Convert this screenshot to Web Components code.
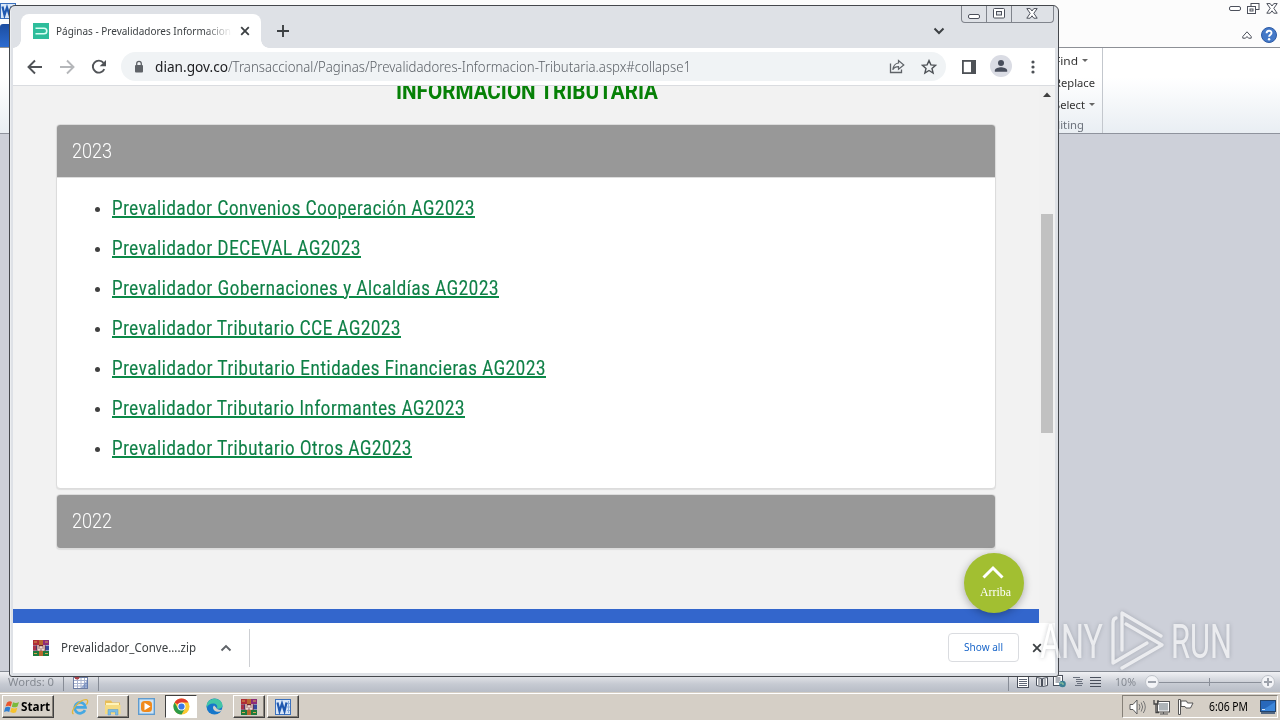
<!DOCTYPE html>
<html lang="es">
<head>
<meta charset="utf-8">
<title>Prevalidadores</title>
<style>
    html, body { margin: 0; width: 1280px; height: 720px; overflow: hidden; }
    body { font-family: "Noto Sans", "Open Sans", sans-serif; background: #cdd0d9; }
</style>
</head>
<body>
<desk-top>
    <word-window></word-window>
    <chrome-window slot="window">
        <accordion-panel year="2023">
            <doc-link w="363">Prevalidador Convenios Cooperación AG2023</doc-link>
            <doc-link w="249">Prevalidador DECEVAL AG2023</doc-link>
            <doc-link w="387">Prevalidador Gobernaciones y Alcaldías AG2023</doc-link>
            <doc-link w="289">Prevalidador Tributario CCE AG2023</doc-link>
            <doc-link w="434">Prevalidador Tributario Entidades Financieras AG2023</doc-link>
            <doc-link w="353">Prevalidador Tributario Informantes AG2023</doc-link>
            <doc-link w="300">Prevalidador Tributario Otros AG2023</doc-link>
        </accordion-panel>
        <accordion-panel year="2022" closed></accordion-panel>
    </chrome-window>
    <task-bar slot="bar"></task-bar>
    <water-mark slot="mark"></water-mark>
</desk-top>

<script>
// [width, height, markup]
const ICONS = {
    dian: [16, 16, '<rect width="16" height="16" fill="#2dbd9b"/><path d="M2.5 5.2H11a2.6 2.6 0 0 1 0 5.6H2.5" fill="none" stroke="#d9fff3" stroke-width="1.6"/>'],
    close: [10, 10, '<path d="M1.2 1.2l7.6 7.6M8.8 1.2L1.2 8.8" stroke="#3c4043" stroke-width="1.8"/>'],
    plus: [12, 12, '<path d="M6 0v12M0 6h12" stroke="#3c4043" stroke-width="1.9"/>'],
    chevron: [12, 8, '<path d="M1.5 1.5L6 6l4.500-4.500" fill="none" stroke="#3c4043" stroke-width="2"/>'],
    back: [16, 16, '<path d="M15 8H2M8 1.500L1.500 8 8 14.500" fill="none" stroke="#505357" stroke-width="1.9"/>'],
    forward: [16, 16, '<path d="M1 8h13M8 1.500L14.500 8 8 14.500" fill="none" stroke="#b5b7ba" stroke-width="1.9"/>'],
    reload: [16, 16, '<path d="M13.300 10.200A6 6 0 1 1 12.500 3.800" fill="none" stroke="#505357" stroke-width="1.9"/><path d="M15 1v6.300H8.700z" fill="#505357"/>'],
    lock: [10, 14, '<rect x="1" y="5" width="8" height="7.500" rx="1" fill="#5f6368"/><path d="M2.700 6V3.600a2.300 2.300 0 0 1 4.600 0V6" fill="none" stroke="#5f6368" stroke-width="1.300"/>'],
    share: [16, 15, '<path d="M1.500 4.500v9h11v-3" fill="none" stroke="#5f6368" stroke-width="1.300"/><path d="M9.500 4V1.500L14.800 6 9.500 10.300V7.700C7 7.700 5 8.500 3.800 10.800 4.300 7 6.200 4.400 9.500 4z" fill="none" stroke="#5f6368" stroke-width="1.200"/>'],
    star: [16, 16, '<path d="M8 1.600l1.900 4.300 4.700.4-3.600 3.100 1.100 4.600L8 11.500 3.900 14l1.100-4.600L1.400 6.300l4.700-.4z" fill="none" stroke="#4d5156" stroke-width="1.400"/>'],
    side: [14, 14, '<rect x=".9" y=".9" width="12.200" height="12.200" fill="#fff" stroke="#4d5156" stroke-width="1.800"/><path d="M9 1h4v12H9z" fill="#4d5156"/>'],
    user: [22, 22, '<circle cx="11" cy="11" r="11" fill="#dadce4"/><circle cx="11" cy="8" r="3" fill="#484e5c"/><path d="M4.800 16.700v-1.200c0-2 4-3.200 6.200-3.200s6.200 1.200 6.200 3.200v1.200z" fill="#484e5c"/>'],
    dots: [4, 14, '<g fill="#4d5156"><circle cx="2" cy="2" r="1.600"/><circle cx="2" cy="7" r="1.600"/><circle cx="2" cy="12" r="1.600"/></g>'],
    arrowUp: [8, 5, '<path d="M0 5L4 .5 8 5z" fill="#404040"/>'],
    dlUp: [12, 8, '<path d="M1.500 6.500L6 2l4.500 4.500" fill="none" stroke="#5f6368" stroke-width="1.900"/>'],
    topUp: [22, 14, '<path d="M1.500 12.500L11 3l9.500 9.500" fill="none" stroke="#fff" stroke-width="3"/>'],
    winrar: [16, 16, '<path d="M0 0h6v5H0z" fill="#b02d35"/><path d="M10 0h6v5h-6z" fill="#8d2a78"/><path d="M0 5.500h16v5H0z" fill="#34489e"/><path d="M0 5.500h3v5H0z" fill="#a8324a"/><path d="M0 11h16v5H0z" fill="#1d7a3a"/><path d="M6 0h4v16H6z" fill="#b8662f"/><path d="M3.500 5h9v6h-9z" fill="#6d2130"/><path d="M5 5v5h2V7h2v3h2V5" fill="none" stroke="#f7ecdf" stroke-width="1.300"/><path d="M1 2h3M12 2h3M1 13.500h3M12 13.500h3" stroke="#d7a04d"/>'],
    winMin: [12, 5, '<rect x=".5" y=".5" width="11" height="4" rx="1.500" fill="#fff" stroke="#4c505b"/>'],
    winMax: [12, 11, '<rect x=".5" y=".5" width="11" height="9.500" rx="1" fill="#fff" stroke="#4c505b"/><rect x="3.500" y="3.500" width="5" height="3.500" fill="#dee1e6" stroke="#4c505b"/>'],
    winClose: [12, 11, '<path d="M.8.600h3.400L6 3 7.800.600h3.400L7.800 5.300l3.400 4.900H7.800L6 7.800l-1.800 2.400H.8l3.400-4.900z" fill="#fff" stroke="#4c505b"/>'],
    restore: [13, 11, '<rect x="4" y=".5" width="8" height="6" fill="#fff" stroke="#4c505b"/><rect x=".5" y="3.500" width="8" height="7" fill="#fff" stroke="#4c505b"/><rect x="3" y="6" width="3" height="2" fill="none" stroke="#4c505b"/>'],
    collapse: [10, 9, '<path d="M.8 7.200V5.500L5 .800l4.200 4.700v1.700H6.500L5 5.500 3.500 7.200z" fill="#fff" stroke="#4c505b"/>'],
    help: [16, 16, '<circle cx="8" cy="8" r="7.500" fill="#4479c8" stroke="#2d5ba5"/><path d="M5.600 6.200C5.600 3 10.600 3 10.500 6c0 1.600-2.400 1.800-2.400 3.700" fill="none" stroke="#fff" stroke-width="1.900"/><circle cx="8.100" cy="12.200" r="1.200" fill="#fff"/>'],
    word: [16, 16, '<rect x=".5" y=".5" width="15" height="15" fill="#d9e7f8" stroke="#3a70bd"/><path d="M13.500 2v12M12 4.500h3M12 8h3M12 11.500h3" stroke="#8aaede"/><path d="M2.500 3.500l2 8.700L7 4.500l2.500 7.700 2-8.700" fill="none" stroke="#1f58b0" stroke-width="2.200"/>'],
    calendar: [16, 14, '<rect x=".5" y="2.500" width="14" height="11" fill="#fff" stroke="#6d7da3"/><path d="M1 5.500h13M1 8.500h13M1 11h13M4.500 3v10M8 3v10M11.500 3v10" stroke="#a9b4d0"/><path d="M8 13h7V4z" fill="#5f7bb5" opacity=".6"/><circle cx="4" cy="2" r="2.500" fill="#a9434a"/>'],
    start: [16, 16, '<path d="M3 3.500Q6 1.500 8 3L6.800 7.500Q4.500 6 1.500 7.500z" fill="#e9562d"/><path d="M9 3.200q3 1.500 6-.2L13.500 7.500q-3 1.600-5.700.2z" fill="#7bba3c"/><path d="M1.200 8.500q3-1.500 5.200 0L5.200 13Q3 11.500 0 13z" fill="#2f7fd1"/><path d="M7.500 8.800q3 1.400 5.800-.1L12 13.200q-3 1.400-5.800-.1z" fill="#f6c22d"/>'],
    ie: [18, 18, '<path d="M14 12.200A5.400 5.400 0 1 1 14.500 9.300H5" fill="none" stroke="#45a8e2" stroke-width="2.700"/><path d="M2.500 16C-2 13.500 9 1 15.500 1.700c2.200.5 1 3.500-.1 5" fill="none" stroke="#e2b63a" stroke-width="1.300"/>'],
    folder: [18, 18, '<path d="M1 2.500h6l1.500 2H16V16H1z" fill="#e8bd56"/><path d="M2 5h13v9H2z" fill="#fff3b8"/><path d="M1 7h15.500v9H1z" fill="#f5db82"/><path d="M4 17v-5.500h10V17h-2.500v-3h-5v3z" fill="#79bde8" stroke="#5a99c4" stroke-width=".5"/>'],
    media: [17, 17, '<rect x=".7" y=".7" width="15.600" height="15.600" fill="#cfe5f6" stroke="#5e9bcf" stroke-width="1.400"/><rect x="3" y="3" width="11" height="11" rx="3.500" fill="#f08a1c"/><path d="M6.500 4.800v7.400l6-3.700z" fill="#fff"/>'],
    chrome: [17, 17, '<circle cx="8.500" cy="8.500" r="8" fill="#fcc934"/><path d="M8.500 8.500L1.570 4.500A8 8 0 0 1 15.430 4.500H8.500z" fill="#e33b2e"/><path d="M1.570 4.500A8 8 0 0 0 8.500 16.500L12 10.500 8.500 8.500 5 10.500z" fill="#2c9b49"/><circle cx="8.500" cy="8.500" r="4" fill="#fff"/><circle cx="8.500" cy="8.500" r="3.100" fill="#3b78e7"/>'],
    edge: [17, 17, '<circle cx="8.500" cy="8.500" r="8" fill="#1677ca"/><path d="M.7 7C2-1.500 15.500-1.500 16.500 7c.2 3-3 4.700-6 3.400 2-2-.2-5-3.200-4.800C4 5.700 1.500 7.200.7 10z" fill="#42c5a6"/><path d="M8 7.500c-2.500 2.500 0 6.500 5 6.300 1.500-.2 2.800-1 3.500-2.300-2 .9-6 .3-6.400-2z" fill="#d4d0c8"/>'],
    speaker: [17, 16, '<path d="M1 5.500h3l4-4.500v14l-4-4.500H1z" fill="#fff" stroke="#5b5b5b"/><path d="M10 5q2 3 0 6M12.200 3.500q3 4.500 0 9M14.300 2q4 6 0 12" fill="none" stroke="#777"/>'],
    network: [17, 16, '<rect x="5.500" y="3.500" width="10" height="8.500" fill="#aeb4b8" stroke="#fff"/><rect x="4.500" y="2.500" width="12" height="10.500" fill="none" stroke="#555"/><path d="M7 15h8M10.500 13v2" stroke="#555"/><path d="M1 1v4h4V1M3 5v8.500h3" fill="none" stroke="#444" stroke-width="1.300"/>'],
    flag: [17, 16, '<path d="M1.500.5h2V15.500h-2z" fill="#fff" stroke="#555"/><path d="M4 2h5.500l1 2H16l-2.500 5H9L8 7.500H4z" fill="#fff" stroke="#555"/>'],
    desktop: [16, 14, '<rect x=".5" y=".5" width="15" height="11" fill="#2868bb" stroke="#23436b"/><path d="M1 11L15 2v9z" fill="#3c86da"/><path d="M1 13h14" stroke="#23436b" stroke-width="1.500"/><path d="M2 9.500h3" stroke="#cfe2f6"/>'],
    viewPage: [12, 12, '<rect x=".5" y=".5" width="11" height="11" fill="#fff" stroke="#4a505c"/><path d="M2 3.500h8M2 5.500h8M2 7.500h8M2 9.500h8" stroke="#5f6675"/>'],
    viewRead: [12, 12, '<path d="M.5 1.500l5 1v8l-5-1zM11.500 1.500l-5 1v8l5-1z" fill="#fff" stroke="#4a505c"/><path d="M2 4h2.500M2 6h2.500M2 8h2.500M7.500 4H10M7.500 6H10M7.500 8H10" stroke="#5f6675"/>'],
    viewWeb: [13, 13, '<rect x=".5" y=".5" width="9" height="10" fill="#fff" stroke="#4a505c"/><path d="M2.500 3h5M2.500 5h5M2.500 7h4" stroke="#5f6675"/><circle cx="9.500" cy="9" r="3.300" fill="#3a7f93"/><path d="M7 8h3v2" stroke="#9fd0a0" fill="none"/>'],
    viewOutline: [11, 12, '<path d="M0 1.500h7M3 3.500h7M3 5.500h6M4 7.500h6M2 9.500h7" stroke="#69707d"/>'],
    viewDraft: [11, 12, '<path d="M0 1.500h11M0 4.500h11M0 7.500h11M0 10.500h11" stroke="#4a505c"/>']
};

class UiIcon extends HTMLElement {
    connectedCallback() {
        if (this.shadowRoot) return;
        const [w, h, body] = ICONS[this.getAttribute('name')];
        this.attachShadow({ mode: 'open' }).innerHTML = `
        <style>
            :host { display: block; flex: none; width: ${w}px; height: ${h}px; }
            svg { display: block; }
        </style>
        <svg width="${w}" height="${h}" viewBox="0 0 ${w} ${h}">${body}</svg>`;
    }
}

// One line of text squeezed or stretched to the width in "w"
class FitText extends HTMLElement {
    connectedCallback() {
        if (this.shadowRoot) return;
        const w = Number(this.getAttribute('w'));
        this.attachShadow({ mode: 'open' }).innerHTML = `
        <style>
            :host { display: block; flex: none; width: ${w}px; white-space: nowrap; }
            span { display: inline-block; transform-origin: 0 50%; }
        </style>
        <span><slot></slot></span>`;
        const span = this.shadowRoot.querySelector('span');
        span.style.transform = `scaleX(${w / span.getBoundingClientRect().width})`;
    }
}

class DeskTop extends HTMLElement {
    constructor() {
        super();
        this.attachShadow({ mode: 'open' }).innerHTML = `
        <style>
            :host { display: block; position: relative; width: 1280px; height: 720px; overflow: hidden; }
            ::slotted([slot="window"]) { position: absolute; left: 9px; top: 5px; }
            ::slotted([slot="bar"]) { position: absolute; left: 0; bottom: 0; }
            ::slotted([slot="mark"]) { position: absolute; left: 1040px; top: 609px; }
        </style>
        <slot></slot><slot name="window"></slot><slot name="bar"></slot><slot name="mark"></slot>`;
    }
}

class WordWindow extends HTMLElement {
    constructor() {
        super();
        this.attachShadow({ mode: 'open' }).innerHTML = `
        <style>
            :host { display: flex; flex-direction: column; height: 692px; font-size: 11px; color: #333; }
            .title { height: 47px; display: flex; justify-content: space-between; background: #fcfcfc; border-bottom: 1px solid #8d9096; }
            .file { display: flex; flex-direction: column; justify-content: space-between; padding-top: 3px; }
            .tab { width: 12px; height: 23px; background: linear-gradient(#1c4da0, #2c6bd0); border-radius: 3px 0 0 0; }
            .ctl { padding: 3px 3px 0 0; display: flex; flex-direction: column; align-items: flex-end; gap: 13px; }
            .row { display: flex; align-items: center; gap: 6px; margin-right: -1px; }
            .row.b { gap: 9px; margin-right: 0; }
            .ribbon { height: 85px; display: flex; border-bottom: 1px solid #8f939d; background: linear-gradient(#fff 35%, #e9eef3); }
            .group { width: 48px; padding: 1px 0 0 1054px; border-right: 1px solid #c3c7cd; }
            .cmd { height: 22px; display: flex; align-items: center; gap: 4px; }
            .cmd i { border: 3px solid transparent; border-top-color: #666; border-bottom: 0; }
            .name { line-height: 20px; color: #6b717b; }
            .paper { flex: 1; background: #cdd0d9; }
            .status { height: 21px; box-sizing: border-box; display: flex; align-items: center; border-top: 1px solid #868b94; background: linear-gradient(#f0f1f4, #c6cad2 60%, #b8bdc6); color: #858a92; }
            .status > fit-text { margin-top: -2px; }
            .status > .zoom { margin-top: -1px; }
            .status > ui-icon { margin-top: -1px; }
            .sep { width: 1px; height: 17px; background: #878c96; }
            .zoom { display: flex; align-items: center; }
            .knob { width: 12px; height: 12px; border: 1px solid #bfc3ca; border-radius: 50%; background: #f3f4f7; display: grid; place-items: center; }
            .knob svg { display: block; }
            .track { width: 102px; height: 8px; background: linear-gradient(90deg, transparent 50px, #8a8f99 50px 51px, transparent 51px), linear-gradient(transparent 4px, #8a8f99 4px 5px, transparent 5px); }
        </style>
        <div class="title">
            <div class="file"><ui-icon name="word"></ui-icon><div class="tab"></div></div>
            <div class="ctl">
                <div class="row"><ui-icon name="winMin"></ui-icon><ui-icon name="restore"></ui-icon><ui-icon name="winClose"></ui-icon></div>
                <div class="row b"><ui-icon name="collapse"></ui-icon><ui-icon name="help"></ui-icon></div>
            </div>
        </div>
        <div class="ribbon">
            <div class="group">
                <div class="cmd"><fit-text w="24">Find</fit-text><i></i></div>
                <div class="cmd"><fit-text w="41">Replace</fit-text></div>
                <div class="cmd"><fit-text w="31">Select</fit-text><i></i></div>
                <div class="name"><fit-text w="37" style="margin-left:-7px">Editing</fit-text></div>
            </div>
        </div>
        <div class="paper"></div>
        <div class="status">
            <fit-text w="46" style="margin-left:8px">Words: 0</fit-text>
            <div class="sep" style="margin-left:9px"></div>
            <ui-icon name="calendar" style="margin-left:9px"></ui-icon>
            <div class="sep" style="margin-left:9px"></div>
            <div class="sep" style="margin-left:909px"></div>
            <ui-icon name="viewPage" style="margin-left:8px"></ui-icon>
            <ui-icon name="viewRead" style="margin-left:7px"></ui-icon>
            <ui-icon name="viewWeb" style="margin-left:5px"></ui-icon>
            <ui-icon name="viewOutline" style="margin-left:7px"></ui-icon>
            <ui-icon name="viewDraft" style="margin-left:6px"></ui-icon>
            <fit-text w="21" style="margin-left:14px">10%</fit-text>
            <div class="zoom" style="margin-left:9px">
                <div class="knob"><svg width="8" height="8"><path d="M0 4h8" stroke="#9da2ab" stroke-width="2"/></svg></div>
                <div class="track"></div>
                <div class="knob"><svg width="8" height="8"><path d="M0 4h8M4 0v8" stroke="#9da2ab" stroke-width="2"/></svg></div>
            </div>
        </div>`;
    }
}

class ChromeWindow extends HTMLElement {
    constructor() {
        super();
        this.attachShadow({ mode: 'open' }).innerHTML = `
        <style>
            :host { display: flex; flex-direction: column; box-sizing: border-box; width: 1050px; height: 672px; padding: 0 3px 3px; border: 1px solid #44474c; border-radius: 6px 6px 3px 3px; background: #dee1e6; box-shadow: inset 1px 0 #eceef1; }
            .strip { height: 42px; display: flex; align-items: flex-end; }
            .tab { width: 240px; height: 34px; margin-left: 8px; box-sizing: border-box; padding: 0 11px 1px 12px; display: flex; align-items: center; background: #fff; border-radius: 8px 8px 0 0; font-size: 11.5px; color: #3c4043; }
            .foot { width: 8px; height: 8px; background: radial-gradient(circle at 100% 0, transparent 7.5px, #fff 8px); }
            .title { margin: -1px 0 0 7px; width: 176px; overflow: hidden; -webkit-mask-image: linear-gradient(90deg, #000 84%, transparent); }
            .new { margin: 0 0 11px 8px; }
            .more { margin: 0 0 13px auto; }
            .buttons { align-self: flex-start; height: 16px; display: flex; margin: 0 1px 0 16px; border: 1px solid #80848c; border-top: 0; border-radius: 0 0 4px 4px; }
            .buttons div { display: grid; place-items: center; width: 24px; border-right: 1px solid #80848c; }
            .buttons div:last-child { width: 41px; border: 0; }
            .bar { height: 37px; display: flex; align-items: center; background: #fff; border-bottom: 1px solid #dadce0; }
            .url { width: 825px; height: 29px; margin: 0 16px 0 14px; box-sizing: border-box; border-radius: 15px; padding: 0 9px 0 13px; display: flex; align-items: center; background: #f0f3f5; font-size: 14px; font-weight: 300; color: #5b6066; }
            .url b { font-weight: 400; color: #202124; }
            .view { height: 537px; display: flex; background: #f1f1f1; }
            .page { width: 1026px; height: 537px; position: relative; overflow: hidden; background: #f2f2f2; }
            h2 { margin: -9px 0 0 383px; height: 47px; font: 700 23.5px/28px Roboto, sans-serif; color: #068006; }
            .panels { display: flex; flex-direction: column; gap: 5px; width: 940px; margin-left: 43px; }
            .footer { height: 14px; background: #3366cc; margin-top: 60px; }
            .up { position: absolute; left: 951px; top: 467px; width: 60px; height: 60px; box-sizing: border-box; border-radius: 50%; background: #a2bf31; box-shadow: 0 2px 8px rgba(0,0,0,.3); display: flex; flex-direction: column; align-items: center; padding-top: 12px; color: #fff; font: 13px/16px "Liberation Serif", serif; }
            .up ui-icon { margin-left: -2px; }
            .up fit-text { margin: 5px 0 0 3px; }
            .scroll { flex: 1; display: flex; flex-direction: column; align-items: center; padding-top: 6px; }
            .thumb { width: 12px; height: 219px; margin-top: 117px; background: #c1c1c1; }
            .dl { height: 50px; display: flex; align-items: center; background: #fff; font-size: 12px; color: #3c4043; }
            .dl hr { width: 1px; height: 38px; border: 0; margin: 0 0 0 17px; background: #cdcfd3; }
            .all { width: 69px; height: 27px; display: grid; place-items: center; border: 1px solid #dadce0; border-radius: 4px; margin: -2px 13px 0 auto; color: #1a66c9; font-size: 11.5px; }
        </style>
        <div class="strip">
            <div class="foot" style="margin-right:-8px; background: radial-gradient(circle at 0 0, transparent 7.5px, #fff 8px)"></div>
            <div class="tab">
                <ui-icon name="dian"></ui-icon>
                <div class="title"><fit-text w="175">Páginas - Prevalidadores Informacion</fit-text></div>
                <ui-icon name="close" style="margin-left:8px"></ui-icon>
            </div>
            <div class="foot"></div>
            <ui-icon class="new" name="plus"></ui-icon>
            <ui-icon class="more" name="chevron"></ui-icon>
            <div class="buttons">
                <div><ui-icon name="winMin" style="margin-top:5px"></ui-icon></div>
                <div><ui-icon name="winMax" style="margin-top:-1px"></ui-icon></div>
                <div><ui-icon name="winClose" style="margin:-1px 2px 0 0"></ui-icon></div>
            </div>
        </div>
        <div class="bar">
            <ui-icon name="back" style="margin-left:14px"></ui-icon>
            <ui-icon name="forward" style="margin-left:16px"></ui-icon>
            <ui-icon name="reload" style="margin-left:16px"></ui-icon>
            <div class="url">
                <ui-icon name="lock"></ui-icon>
                <fit-text w="73" style="margin-left:11px"><b>dian.gov.co</b></fit-text>
                <fit-text w="463">/Transaccional/Paginas/Prevalidadores-Informacion-Tributaria.aspx#collapse1</fit-text>
                <ui-icon name="share" style="margin-left:auto"></ui-icon>
                <ui-icon name="star" style="margin-left:16px"></ui-icon>
            </div>
            <ui-icon name="side"></ui-icon>
            <ui-icon name="user" style="margin:-1px 0 0 14px"></ui-icon>
            <ui-icon name="dots" style="margin-left:19px"></ui-icon>
        </div>
        <div class="view">
            <div class="page">
                <h2><fit-text w="262">INFORMACIÓN TRIBUTARIA</fit-text></h2>
                <div class="panels"><slot></slot></div>
                <div class="footer"></div>
                <div class="up"><ui-icon name="topUp"></ui-icon><fit-text w="31">Arriba</fit-text></div>
            </div>
            <div class="scroll"><ui-icon name="arrowUp"></ui-icon><div class="thumb"></div></div>
        </div>
        <div class="dl">
            <ui-icon name="winrar" style="margin:-1px 0 0 20px"></ui-icon>
            <fit-text w="135" style="margin:-2px 0 0 12px">Prevalidador_Conve....zip</fit-text>
            <ui-icon name="dlUp" style="margin-left:24px"></ui-icon>
            <hr>
            <div class="all"><fit-text w="39" style="margin-top:-2px">Show all</fit-text></div>
            <ui-icon name="close" style="margin-right:13px"></ui-icon>
        </div>`;
    }
}

class AccordionPanel extends HTMLElement {
    connectedCallback() {
        if (this.shadowRoot) return;
        const closed = this.hasAttribute('closed');
        this.attachShadow({ mode: 'open' }).innerHTML = `
        <style>
            :host { display: block; box-sizing: border-box; border: 1px solid #dcdcdc; border-radius: 4px; background: #fff; box-shadow: 0 1px 1px rgba(0,0,0,.08); overflow: hidden; font-family: Roboto, sans-serif; }
            .head { height: 52px; padding-left: 15px; display: flex; align-items: center; background: #989898; color: #fff; font-size: 21px; font-weight: 300; }
            .head.closed { height: 53px; padding-bottom: 1px; box-sizing: border-box; }
            .body { padding: 10px 0 20px 36px; border-top: 1px solid #ddd; }
        </style>
        <div class="head ${closed ? 'closed' : ''}"><fit-text w="40">${this.getAttribute('year')}</fit-text></div>
        ${closed ? '' : '<div class="body"><slot></slot></div>'}`;
    }
}

class DocLink extends HTMLElement {
    connectedCallback() {
        if (this.shadowRoot) return;
        this.attachShadow({ mode: 'open' }).innerHTML = `
        <style>
            :host { display: flex; align-items: center; height: 40px; font-size: 20px; letter-spacing: .8px; }
            i { width: 5px; height: 5px; margin: 2px 12px 0 2px; border-radius: 50%; background: #404040; }
            a { color: #0d7f45; -webkit-text-stroke: .2px; text-decoration: underline #0b8a48; text-decoration-thickness: 2px; text-underline-offset: 1px; }
        </style>
        <i></i><fit-text w="${this.getAttribute('w')}"><a><slot></slot></a></fit-text>`;
    }
}

class TaskBar extends HTMLElement {
    constructor() {
        super();
        this.attachShadow({ mode: 'open' }).innerHTML = `
        <style>
            :host { display: flex; align-items: center; box-sizing: border-box; width: 1280px; height: 28px; padding: 1px 2px 0; background: #d5cfc6; box-shadow: inset 0 1px #d5cfc6, inset 0 2px #fff; font-size: 12px; color: #000; }
            .btn { box-sizing: border-box; height: 23px; width: 32px; display: flex; align-items: center; justify-content: center; border: 1px solid; border-color: #fff #404040 #404040 #fff; box-shadow: inset -1px -1px #858078; }
            .on { background: #fff; border-color: #404040 #fff #fff #404040; box-shadow: none; }
            .start { width: 52px; justify-content: flex-start; gap: 1px; padding-left: 1px; font-weight: 700; }
            .tray { box-sizing: border-box; height: 23px; width: 156px; margin-left: auto; padding-left: 6px; display: flex; align-items: center; border: 1px solid; border-color: #858078 #fff #fff #858078; }
        </style>
        <div class="btn start"><ui-icon name="start"></ui-icon><fit-text w="29">Start</fit-text></div>
        <ui-icon name="ie" style="margin-left:17px"></ui-icon>
        <div class="btn" style="margin-left:8px"><ui-icon name="folder"></ui-icon></div>
        <ui-icon name="media" style="margin-left:9px"></ui-icon>
        <div class="btn on" style="margin-left:10px"><ui-icon name="chrome"></ui-icon></div>
        <ui-icon name="edge" style="margin-left:9px"></ui-icon>
        <div class="btn" style="margin-left:10px"><ui-icon name="winrar"></ui-icon></div>
        <div class="btn" style="margin-left:2px"><ui-icon name="word"></ui-icon></div>
        <div class="tray">
            <ui-icon name="speaker"></ui-icon>
            <ui-icon name="network" style="margin-left:7px"></ui-icon>
            <ui-icon name="flag" style="margin-left:7px"></ui-icon>
            <fit-text w="39" style="margin-left:15px">6:06 PM</fit-text>
            <ui-icon name="desktop" style="margin-left:12px"></ui-icon>
        </div>`;
    }
}

class WaterMark extends HTMLElement {
    constructor() {
        super();
        this.attachShadow({ mode: 'open' }).innerHTML = `
        <style>
            :host { display: flex; align-items: center; height: 64px; opacity: .6; color: #fff; font: 400 49px/64px Roboto, sans-serif; filter: drop-shadow(0 0 2px rgba(80,85,95,.55)); }
            svg { margin: 0 4px 0 6px; flex: none; }
            fit-text { margin-top: 1px; }
        </style>
        <fit-text w="63">ANY</fit-text>
        <svg width="58" height="64" viewBox="0 0 58 64" fill="none" stroke="#fff" stroke-width="3.300" stroke-linejoin="round" stroke-linecap="round">
            <path d="M7 9Q4 9.500 4 14V54L38 34"/>
            <path d="M52 27L13 4V41"/>
            <path d="M17 15L53 36 13 59"/>
        </svg>
        <fit-text w="61">RUN</fit-text>`;
    }
}

customElements.define('ui-icon', UiIcon);
customElements.define('fit-text', FitText);
customElements.define('desk-top', DeskTop);
customElements.define('word-window', WordWindow);
customElements.define('chrome-window', ChromeWindow);
customElements.define('accordion-panel', AccordionPanel);
customElements.define('doc-link', DocLink);
customElements.define('task-bar', TaskBar);
customElements.define('water-mark', WaterMark);
</script>
</body>
</html>
